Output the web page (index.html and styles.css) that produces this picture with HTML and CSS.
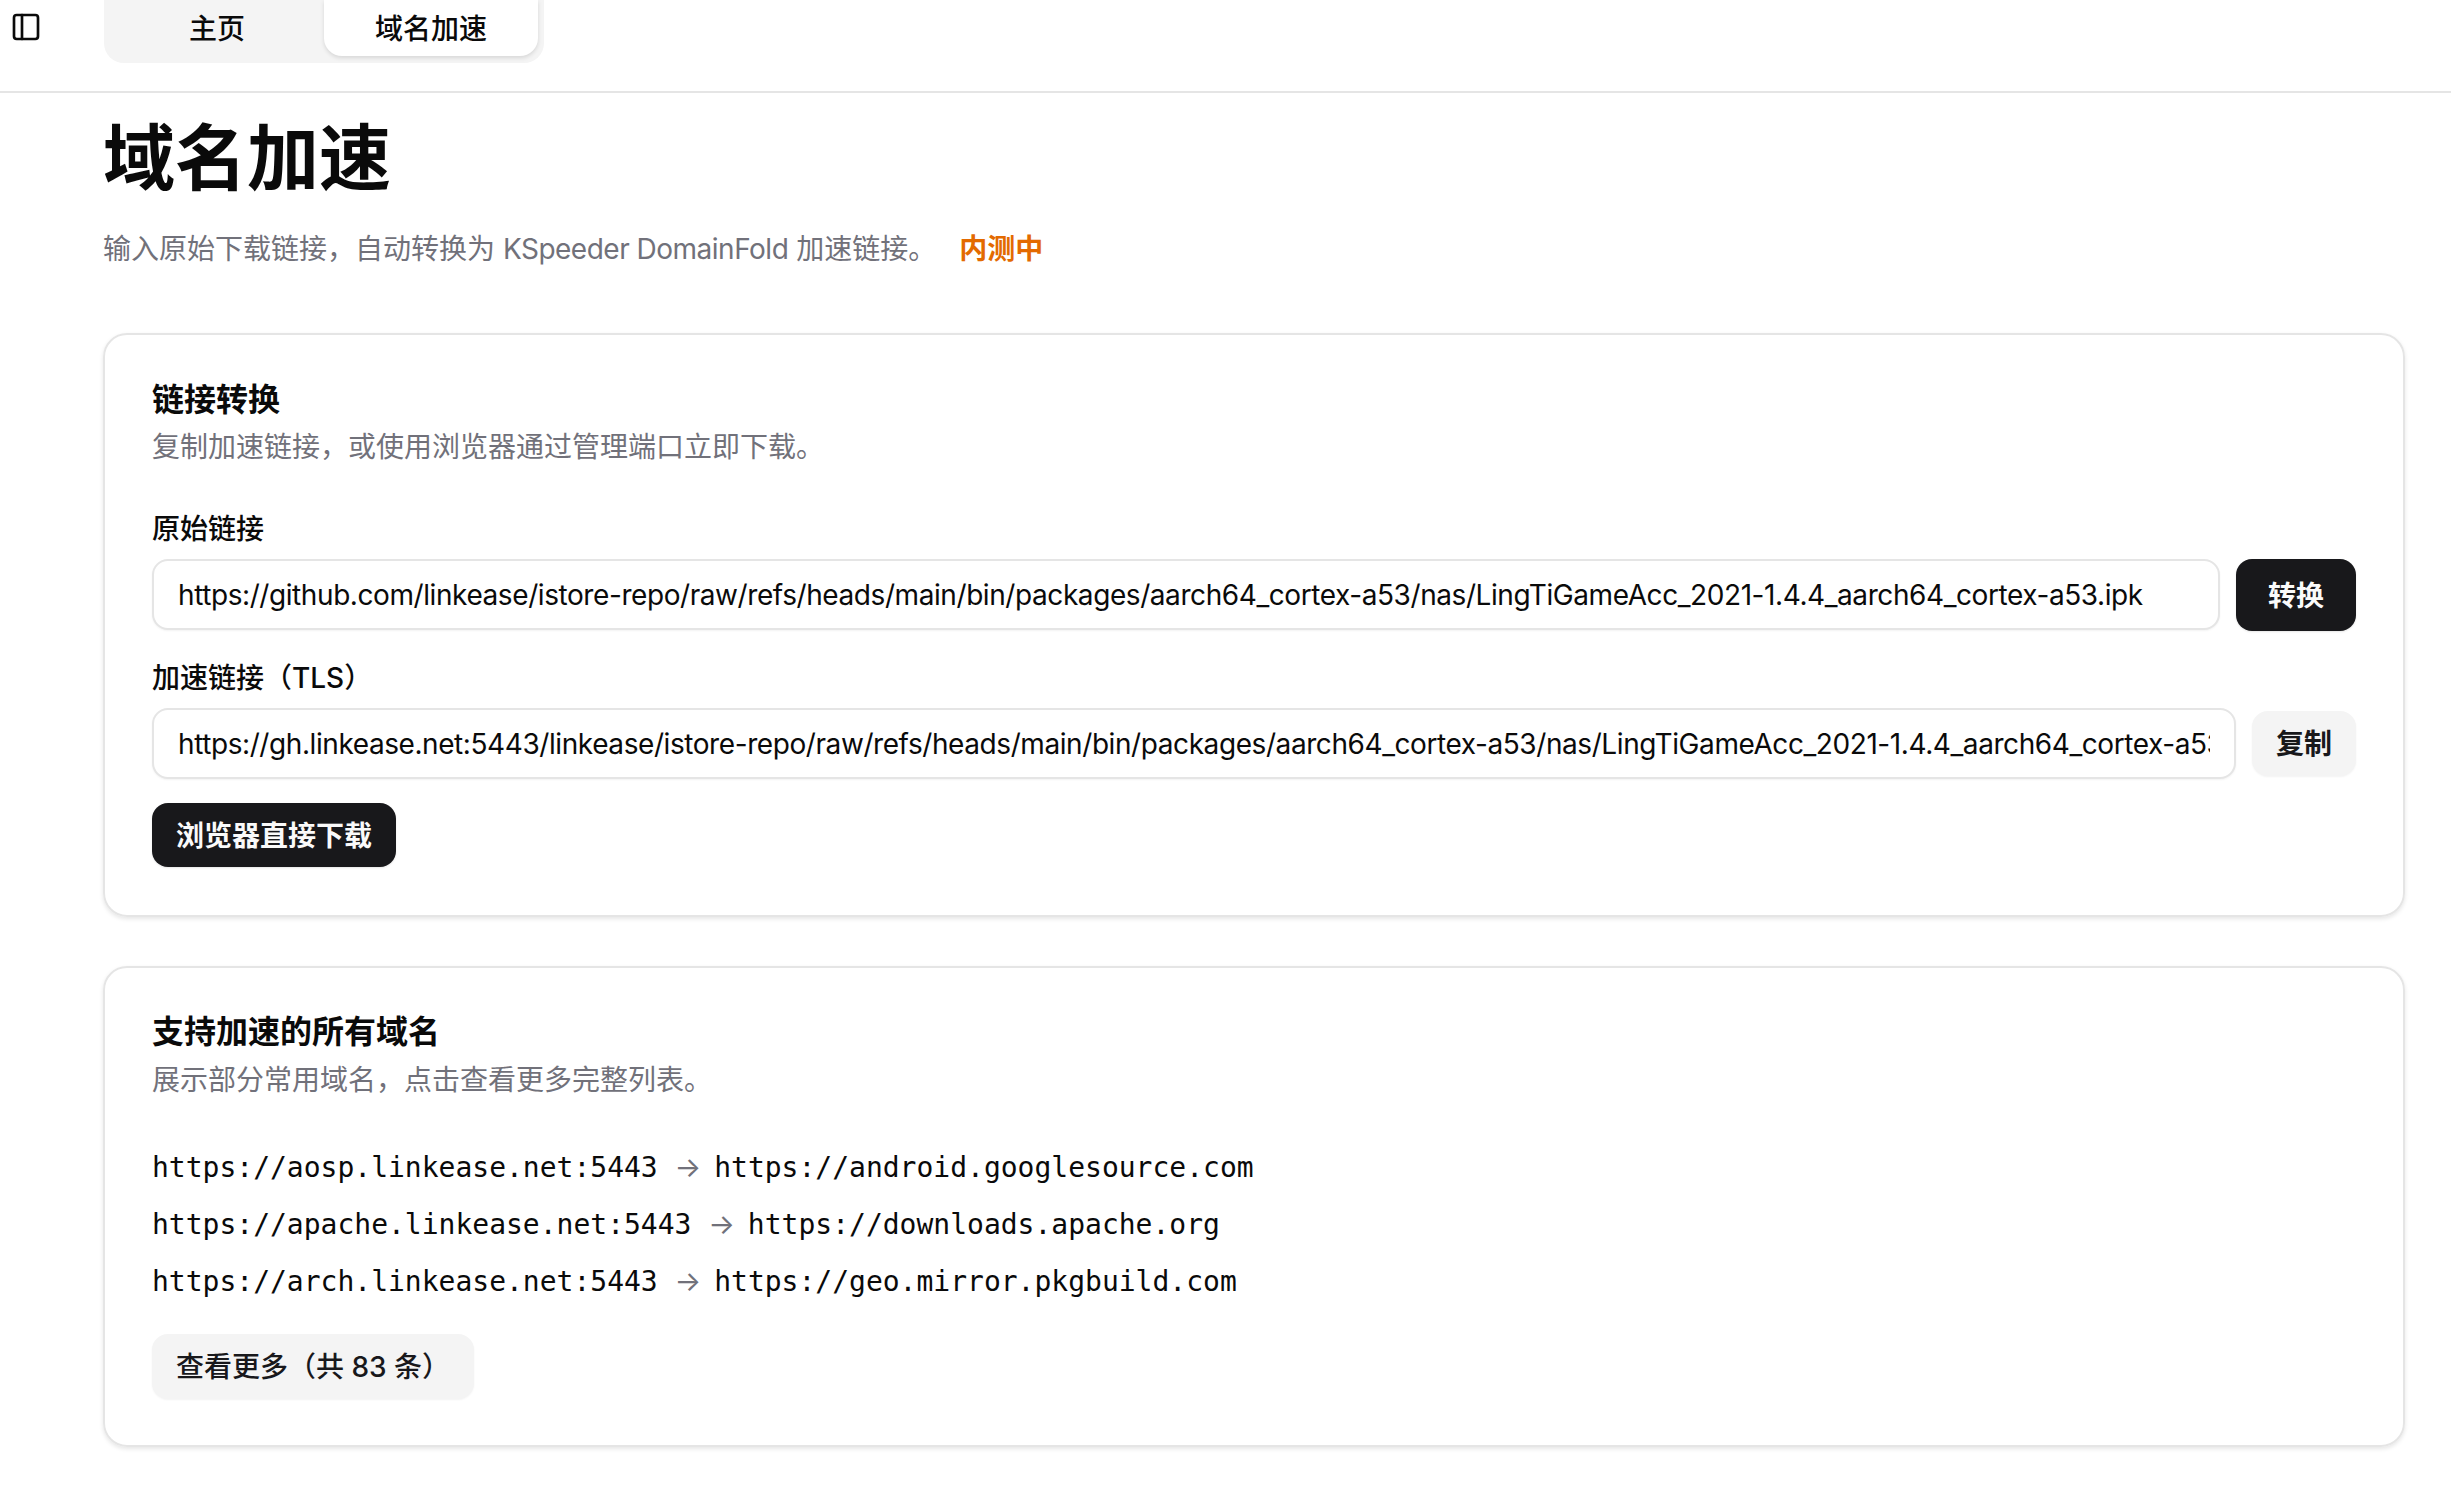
FILE: index.html
```html
<!DOCTYPE html>
<html lang="zh-CN">
<head>
<meta charset="utf-8">
<title>域名加速</title>
<link rel="stylesheet" href="styles.css">
</head>
<body>
<header class="topbar">
  <button class="side-toggle" aria-label="切换侧边栏">
    <svg viewBox="0 0 24 24" class="side-icon" fill="none" stroke="currentColor" stroke-width="2" stroke-linecap="round" stroke-linejoin="round"><rect x="3" y="3" width="18" height="18" rx="2"></rect><path d="M9 3v18"></path></svg>
  </button>
  <nav class="tabs">
    <a class="tab">主页</a>
    <a class="tab tab-active">域名加速</a>
  </nav>
</header>
<main class="page">
  <h1 class="page-title">域名加速</h1>
  <p class="page-sub"><span>输入原始下载链接，自动转换为 <span class="latin">KSpeeder DomainFold</span> 加速链接。</span><span class="beta">内测中</span></p>

  <section class="card card-convert">
    <h2 class="card-title">链接转换</h2>
    <p class="card-desc">复制加速链接，或使用浏览器通过管理端口立即下载。</p>
    <label class="field-label field-first">原始链接</label>
    <div class="field-row">
      <input class="text-input" value="https://github.com/linkease/istore-repo/raw/refs/heads/main/bin/packages/aarch64_cortex-a53/nas/LingTiGameAcc_2021-1.4.4_aarch64_cortex-a53.ipk">
      <button class="btn btn-dark btn-convert">转换</button>
    </div>
    <label class="field-label field-second">加速链接（TLS）</label>
    <div class="field-row">
      <input class="text-input" readonly value="https://gh.linkease.net:5443/linkease/istore-repo/raw/refs/heads/main/bin/packages/aarch64_cortex-a53/nas/LingTiGameAcc_2021-1.4.4_aarch64_cortex-a53.ipk">
      <button class="btn btn-light btn-copy">复制</button>
    </div>
    <button class="btn btn-dark btn-download">浏览器直接下载</button>
  </section>

  <section class="card card-domains">
    <h2 class="card-title">支持加速的所有域名</h2>
    <p class="card-desc">展示部分常用域名，点击查看更多完整列表。</p>
    <ul class="domain-list">
      <li>https://aosp.linkease.net:5443 <span class="arrow">→</span> https://android.googlesource.com</li>
      <li>https://apache.linkease.net:5443 <span class="arrow">→</span> https://downloads.apache.org</li>
      <li>https://arch.linkease.net:5443 <span class="arrow">→</span> https://geo.mirror.pkgbuild.com</li>
    </ul>
    <button class="btn btn-light btn-more">查看更多（共 83 条）</button>
  </section>
</main>
</body>
</html>
```
FILE: styles.css
```css
* { box-sizing: border-box; }
html, body { margin: 0; padding: 0; }
body {
  background: #fff;
  color: #0a0a0a;
  font-family: Inter, "Noto Sans CJK SC", sans-serif;
  font-size: 28px;
  height: 1498px;
  overflow: hidden;
}
.topbar {
  display: flex;
  height: 93px;
  border-bottom: 2px solid #e5e5e5;
  align-items: flex-start;
}
.side-toggle {
  width: 104px;
  height: 54px;
  padding: 0 0 0 10px;
  margin: 0;
  border: 0;
  background: none;
  color: #0a0a0a;
  display: flex;
  align-items: center;
}
.side-icon { width: 32px; height: 32px; }
.tabs {
  display: flex;
  height: 63px;
  width: 440px;
  padding: 0 6px 7px;
  background: #f4f4f4;
  border-radius: 0 0 20px 20px;
}
.tab {
  flex: 0 0 214px;
  display: flex;
  align-items: center;
  justify-content: center;
  padding-bottom: 3px;
  font-weight: 500;
  font-size: 28px;
  border-radius: 0 0 18px 18px;
  white-space: nowrap;
}
.tab-active {
  background: #fff;
  box-shadow: 0 2px 4px rgba(0,0,0,.12);
}
.page { padding: 0 46px 0 103px; }
.page-title {
  margin: 0;
  padding-top: 21px;
  font-size: 72px;
  line-height: 88px;
  font-weight: 700;
}
.page-sub {
  margin: 0;
  padding-top: 27px;
  line-height: 40px;
  color: #71717a;
  display: flex;
}
.latin { letter-spacing: -0.5px; }
.beta { color: #e36a00; font-weight: 600; margin-left: 23px; }
.card {
  border: 2px solid #e5e5e5;
  border-radius: 24px;
  padding: 45px 47px 48px;
  box-shadow: 0 2px 4px rgba(0,0,0,.1);
}
.card-convert { margin-top: 64px; height: 584px; }
.card-domains { margin-top: 49px; height: 481px; padding-top: 44px; }
.card-title { margin: 0; font-size: 32px; line-height: 40px; font-weight: 600; }
.card-desc { margin: 7px 0 0; line-height: 40px; color: #71717a; }
.card-domains .card-desc { margin-top: 8px; }
.field-label { display: block; line-height: 40px; font-weight: 500; }
.field-first { margin-top: 42px; }
.field-second { margin-top: 27px; }
.field-row { display: flex; gap: 16px; margin-top: 10px; align-items: flex-start; }
.text-input {
  flex: 1;
  min-width: 0;
  height: 71px;
  padding: 1px 24px 0;
  border: 2px solid #e5e5e5;
  border-radius: 16px;
  font: 400 28px Inter, "Noto Sans CJK SC", sans-serif;
  letter-spacing: -0.42px;
  color: #0a0a0a;
  background: #fff;
  outline: none;
  box-shadow: 0 1px 2px rgba(0,0,0,.05);
}
.btn {
  border: 0;
  border-radius: 16px;
  font: 600 28px Inter, "Noto Sans CJK SC", sans-serif;
  white-space: nowrap;
  padding: 0 24px 2px;
}
.btn-dark { background: #18181b; color: #fafafa; box-shadow: 0 1px 2px rgba(0,0,0,.1); }
.btn-light { background: #f4f4f4; color: #18181b; box-shadow: 0 1px 2px rgba(0,0,0,.05); }
.btn-convert { width: 120px; height: 72px; flex: none; }
.btn-copy { width: 104px; height: 65px; flex: none; margin-top: 3px; padding-bottom: 4px; }
.btn-download { display: block; height: 64px; width: 244px; margin-top: 24px; }
.domain-list {
  list-style: none;
  margin: 39px 0 0;
  padding: 0;
  font-family: "DejaVu Sans Mono", monospace;
  font-size: 28px;
  line-height: 57px;
}
.arrow { color: #71717a; font-family: Inter, sans-serif; line-height: 1; letter-spacing: -4px; }
.btn-more { display: block; height: 65px; width: 322px; margin-top: 24px; padding-bottom: 4px; font-weight: 500; text-align: left; }
```
